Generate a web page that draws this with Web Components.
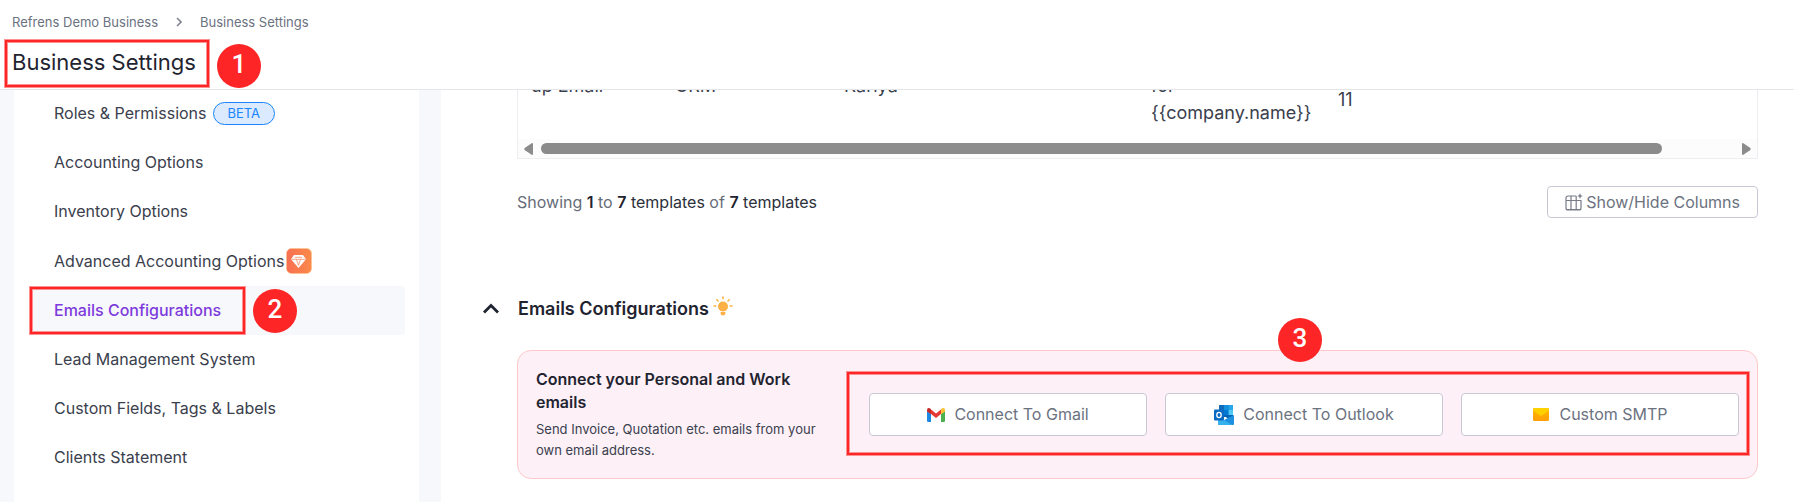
<!DOCTYPE html>
<html lang="en">
<head>
<meta charset="utf-8">
<title>Business Settings</title>
<style>
  html, body { margin: 0; }
  body { font: 16px/25px Inter, "Liberation Sans", sans-serif; color: #3a404d; background: #f7f8fb; }
</style>
</head>
<body>
<settings-page></settings-page>

<template id="t-page">
  <style>
    :host { display: flex; flex-direction: column; height: 100vh; overflow: hidden; }
    .body { flex: 1; min-height: 0; display: flex; overflow: hidden; padding-left: 14px; gap: 22px; }
  </style>
  <page-header></page-header>
  <div class="body">
    <side-nav></side-nav>
    <settings-main></settings-main>
  </div>
</template>

<template id="t-header">
  <style>
    :host { display: block; position: relative; z-index: 1; background: #fff; border-bottom: 1px solid #e4e5e9; padding: 12px; }
    nav { display: flex; align-items: center; gap: 18px; font-size: 13px; line-height: 20px; }
    a { color: #6b7280; text-decoration: none; }
    .title { position: relative; display: inline-block; vertical-align: top; margin-top: 15px; }
    h1 { margin: 0; font-size: 22px; line-height: 30px; font-weight: 400; color: #1f2430; }
    callout-ring { inset: -8px -14px -11px -8px; }
    callout-badge { left: 205px; top: -3px; }
  </style>
  <nav aria-label="Breadcrumb">
    <a href="#">Refrens Demo Business</a>
    <svg width="6" height="10" viewBox="0 0 6 10" fill="none" stroke="#80858f" stroke-width="1.6"><path d="M1 1l4 4-4 4"/></svg>
    <a href="#">Business Settings</a>
  </nav>
  <div class="title">
    <h1>Business Settings</h1>
    <callout-ring></callout-ring>
    <callout-badge>1</callout-badge>
  </div>
</template>

<template id="t-ring">
  <style>
    :host { display: block; position: absolute; box-sizing: border-box; border: 1px solid #fd9292; pointer-events: none; }
    div { box-sizing: border-box; height: 100%; border: 2px solid #fd2525; box-shadow: inset 0 0 0 1px #fd9292; }
  </style>
  <div></div>
</template>

<template id="t-badge">
  <style>
    :host { position: absolute; box-sizing: border-box; width: 44px; height: 44px; padding-bottom: 4px; border-radius: 50%; background: #fd2525; color: #fff; display: flex; align-items: center; justify-content: center; font: 500 26px/40px Roboto, sans-serif; }
  </style>
  <slot></slot>
</template>

<template id="t-side">
  <style>
    :host { display: block; flex: none; box-sizing: border-box; width: 405px; background: #fff; padding: 0 14px 0 15px; }
    nav { margin-top: -1px; }
    .pill { box-sizing: border-box; margin-left: 4px; border: 1px solid #1a85fd; border-radius: 12px; background: #dbeafe; color: #1a85fd; font-size: 13px; line-height: 21px; padding: 0 14px; }
    callout-ring { inset: 0 159px 0 0; }
    callout-badge { left: 224px; top: 3px; }
  </style>
  <nav aria-label="Settings">
    <nav-item>Roles &amp; Permissions<span slot="extra" class="pill">BETA</span></nav-item>
    <nav-item>Accounting Options</nav-item>
    <nav-item>Inventory Options</nav-item>
    <nav-item>Advanced Accounting Options<premium-icon slot="extra"></premium-icon></nav-item>
    <nav-item active>Emails Configurations
      <callout-ring slot="mark"></callout-ring>
      <callout-badge slot="mark">2</callout-badge>
    </nav-item>
    <nav-item>Lead Management System</nav-item>
    <nav-item>Custom Fields, Tags &amp; Labels</nav-item>
    <nav-item>Clients Statement</nav-item>
  </nav>
</template>

<template id="t-item">
  <style>
    :host { display: block; position: relative; border-radius: 4px; }
    :host([active]) { background: #f7f8fb; }
    a { display: flex; align-items: center; gap: 2px; padding: 12px 25px; color: #3a404d; text-decoration: none; }
    :host([active]) a { color: #7d3bdd; font-weight: 500; }
  </style>
  <a href="#"><span><slot></slot></span><slot name="extra"></slot></a>
  <slot name="mark"></slot>
</template>

<template id="t-premium">
  <style>:host { display: block; width: 26px; height: 26px; } svg { display: block; }</style>
  <svg width="26" height="26" viewBox="0 0 26 26">
    <defs><linearGradient id="g"><stop offset="0" stop-color="#f76f52"/><stop offset="1" stop-color="#fb8a4a"/></linearGradient></defs>
    <rect x=".5" y=".5" width="25" height="25" rx="5" fill="url(#g)" stroke="#fdc28c" stroke-width=".6"/>
    <path d="M8 7h9l3 4.300-7.500 8.700L5 11.300z" fill="#fff"/>
    <path d="M5.500 11.300h14M10.500 11.300l2 6 2-6M9 9.300h7" fill="none" stroke="#f87a50" stroke-width=".7"/>
  </svg>
</template>

<template id="t-main">
  <style>
    :host { display: block; flex: 1; min-width: 0; background: #fff; padding: 0 36px 0 42px; }
    .inset { margin-left: 34px; }
    .summary { display: flex; align-items: center; justify-content: space-between; margin-top: 27px; }
    p { margin: 0; color: #666c78; }
    b { font-weight: 600; color: #1f2430; }
    i { font-style: normal; color: #2b303b; }
    .columns { display: flex; align-items: center; gap: 3px; height: 32px; box-sizing: border-box; padding: 0 17px; border: 1px solid #c6c9d4; border-radius: 4px; background: #fff; color: #6b7280; font: inherit; line-height: 24px; }
    .head { display: flex; align-items: center; margin-top: 77px; }
    .toggle { display: flex; width: 35px; padding: 0 0 2px; border: 0; background: none; }
    h2 { margin: 0; font-size: 18px; line-height: 28px; font-weight: 600; color: #1f2430; }
    .bulb { margin-left: 4px; margin-bottom: 6px; }
    connect-card { margin-top: 27px; }
  </style>
  <template-table class="inset"></template-table>
  <div class="inset summary">
    <p>Showing <b>1</b> to <b>7</b> <i>templates</i> of <b>7</b> <i>templates</i></p>
    <button class="columns" type="button">
      <svg width="18" height="18" viewBox="0 0 18 18" fill="none" stroke="#777c87" stroke-width="1.200"><path d="M11 3H3a2 2 0 0 0-2 2v10a2 2 0 0 0 2 2h11a2 2 0 0 0 2-2V7M1 7.500h15M6 3v14M11.200 3v14M1 16.500h15"/><path d="M15 0l.8 2.200L18 3l-2.200.8L15 6l-.8-2.200L12 3l2.200-.8z" fill="#777c87" stroke="none"/></svg>
      <span>Show/Hide Columns</span>
    </button>
  </div>
  <div class="head">
    <button class="toggle" type="button" aria-label="Collapse section" aria-expanded="true">
      <svg width="16" height="11" viewBox="0 0 16 11" fill="none" stroke="#1f2430" stroke-width="2.800"><path d="M1 9.500l7-7 7 7"/></svg>
    </button>
    <h2>Emails Configurations</h2>
    <svg class="bulb" width="20" height="20" viewBox="0 0 20 20" fill="#fcb045" stroke="#fcb045" stroke-width="1.600" stroke-linecap="round">
      <circle cx="10" cy="10.500" r="5" stroke="none"/>
      <path d="M7.400 13h5.200v2H7.400zM7.600 16h4.800v1.500q0 2-2.400 2t-2.400-2z" stroke="none"/>
      <path d="M10 1v1.600M1 10h1.700M17.300 10H19M3.800 3.800l1.200 1.200M16.200 3.800l-1.200 1.200" fill="none"/>
    </svg>
  </div>
  <connect-card class="inset"></connect-card>
</template>

<template id="t-table">
  <style>
    :host { display: block; border: 1px solid #eceef1; border-top: 0; }
    .view { margin-top: -18px; }
    table { width: 100%; table-layout: fixed; border-collapse: collapse; font-size: 18px; line-height: 27px; }
    td { padding: 0 0 13px 13px; vertical-align: top; white-space: nowrap; }
    td.mid { vertical-align: middle; }
    .c1 { width: 144px; } .c2 { width: 169px; } .c3 { width: 307px; } .c4 { width: 187px; }
    .bar { display: flex; align-items: center; height: 19px; padding: 0 6px; background: #fcfcfc; gap: 8px; }
    .track { flex: 1; display: flex; }
    .thumb { width: 94%; height: 11px; border-radius: 6px; background: #8b8b8b; }
    svg { flex: none; }
  </style>
  <div class="view">
    <table>
      <colgroup><col class="c1"><col class="c2"><col class="c3"><col class="c4"><col></colgroup>
      <tbody><tr>
        <td>up Email</td><td>CRM</td><td>Kariya</td><td>for<br>{{company.name}}</td><td class="mid">11</td>
      </tr></tbody>
    </table>
  </div>
  <div class="bar">
    <svg width="9" height="12" viewBox="0 0 9 12" fill="#8b8b8b"><path d="M9 1v10q0 1-1 1L1 7.200Q-.5 6 1 4.800L8 0q1 0 1 1z"/></svg>
    <div class="track"><div class="thumb"></div></div>
    <svg width="9" height="12" viewBox="0 0 9 12" fill="#8b8b8b"><path d="M0 1v10q0 1 1 1l7-4.800q1.500-1.200 0-2.400L1 0Q0 0 0 1z"/></svg>
  </div>
</template>

<template id="t-card">
  <style>
    :host { display: grid; grid-template-columns: 300px 1fr; gap: 33px; align-items: center; padding: 17px 18px; border: 1px solid #ffc9cb; border-radius: 14px; background: #fdf0f7; }
    h3 { margin: 0 0 5px; font-size: 16px; line-height: 23px; font-weight: 600; color: #1f2430; }
    p { margin: 0; font-size: 13px; line-height: 21px; }
    .actions { position: relative; display: grid; grid-template-columns: repeat(3, 1fr); gap: 18px; }
    callout-ring { inset: -22px -11px -20px -23px; }
    callout-badge { left: calc(50% - 26px); top: -75px; }
  </style>
  <div>
    <h3>Connect your Personal and Work emails</h3>
    <p>Send Invoice, Quotation etc. emails from your own email address.</p>
  </div>
  <div class="actions">
    <provider-button>
      <svg slot="icon" width="18" height="14" viewBox="0 0 18 14">
        <path d="M0 3l4 3v8H1.200Q0 14 0 12.800z" fill="#1e88e5"/>
        <path d="M18 3l-4 3v8h2.800q1.200 0 1.200-1.200z" fill="#4caf50"/>
        <path d="M4 1.500l5 4 5-4V6l-5 4-5-4z" fill="#e53935"/>
        <path d="M0 3.500V2Q0 0 1.800 0 2.700 0 4 1.200V6.300z" fill="#c62828"/>
        <path d="M18 3.500V2q0-2-1.800-2-.9 0-2.200 1.200v5.100z" fill="#fbc02d"/>
      </svg>
      Connect To Gmail
    </provider-button>
    <provider-button>
      <svg slot="icon" width="20" height="20" viewBox="0 0 20 20">
        <path d="M5 1q0-1 1-1h12q1 0 1 1v11H5z" fill="#0a5eb0"/>
        <path d="M5 1q0-1 1-1h4v5H5z" fill="#0f6cbd"/><path d="M10 0h4.500v5H10z" fill="#1490df"/><path d="M14.500 0H18q1 0 1 1v4h-4.500z" fill="#28a8ea"/>
        <path d="M10 5h4.500v5H10z" fill="#0078d4"/><path d="M14.500 5H19v5h-4.500z" fill="#50c9f7"/><path d="M10 10h9l-5 4z" fill="#0364b8"/>
        <path d="M20 10v9q0 1-1 1H5q-1 0-1-1l8-5z" fill="#1f8fe0"/><path d="M4 12l14.500 8H5q-1 0-1-1z" fill="#35b1ee"/>
        <rect y="4.500" width="10" height="11" rx="1" fill="#0b6bc4"/>
        <ellipse cx="5" cy="10" rx="2.200" ry="2.600" fill="none" stroke="#fff" stroke-width="1.300"/>
      </svg>
      Connect To Outlook
    </provider-button>
    <provider-button>
      <svg slot="icon" width="18" height="14" viewBox="0 0 18 14">
        <defs><linearGradient id="m" x2="0" y2="1"><stop offset="0" stop-color="#ffb900"/><stop offset="1" stop-color="#ff9e0a"/></linearGradient></defs>
        <rect x="1" width="16" height="13" rx="1.500" fill="url(#m)"/>
        <path d="M1 2.500V1.500Q1 0 2.500 0h13Q17 0 17 1.500v1L9 8z" fill="#ffd000"/>
      </svg>
      Custom SMTP
    </provider-button>
    <callout-ring></callout-ring>
    <callout-badge>3</callout-badge>
  </div>
</template>

<template id="t-provider">
  <style>
    :host { display: block; }
    button { display: flex; align-items: center; justify-content: center; gap: 9px; box-sizing: border-box; width: 100%; height: 43px; padding: 0; border: 1px solid #c6c9d4; border-radius: 4px; background: #fff; color: #6b7280; font: inherit; line-height: 25px; }
  </style>
  <button type="button"><slot name="icon"></slot><span><slot></slot></span></button>
</template>

<script>
  const define = (name, templateId) => customElements.define(name, class extends HTMLElement {
    constructor() {
      super();
      this.attachShadow({ mode: 'open' })
        .append(document.getElementById(templateId).content.cloneNode(true));
    }
  });
  define('callout-ring', 't-ring');
  define('callout-badge', 't-badge');
  define('premium-icon', 't-premium');
  define('nav-item', 't-item');
  define('side-nav', 't-side');
  define('page-header', 't-header');
  define('template-table', 't-table');
  define('provider-button', 't-provider');
  define('connect-card', 't-card');
  define('settings-main', 't-main');
  define('settings-page', 't-page');
</script>
</body>
</html>
